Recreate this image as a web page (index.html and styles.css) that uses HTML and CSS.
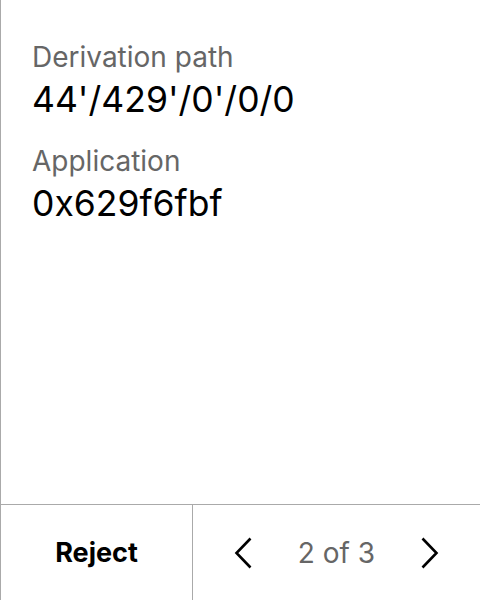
FILE: index.html
```html
<!DOCTYPE html>
<html>
<head>
<meta charset="utf-8">
<link rel="stylesheet" href="styles.css">
</head>
<body>
<div class="screen">
  <main class="content">
    <div class="field">
      <div class="label">Derivation path</div>
      <div class="value">44'/429'/0'/0/0</div>
    </div>
    <div class="field">
      <div class="label">Application</div>
      <div class="value">0x629f6fbf</div>
    </div>
  </main>
  <footer class="footer">
    <div class="reject">Reject</div>
    <div class="pager">
      <svg class="chev" width="18" height="32" viewBox="0 0 18 32"><path d="M16.5 1.5 L2.5 16 L16.5 30.5" fill="none" stroke="#000" stroke-width="2.6"/></svg>
      <span class="count">2 of 3</span>
      <svg class="chev" width="18" height="32" viewBox="0 0 18 32"><path d="M1.5 1.5 L15.5 16 L1.5 30.5" fill="none" stroke="#000" stroke-width="2.6"/></svg>
    </div>
  </footer>
</div>
</body>
</html>
```
FILE: styles.css
```css
html, body { margin: 0; padding: 0; background: #fff; }
body { font-family: Inter, "Noto Sans", sans-serif; }
.screen {
  width: 480px; height: 600px; box-sizing: border-box;
  border-left: 1px solid #aaa;
  display: flex; flex-direction: column;
}
.content { flex: 1; padding: 40px 0 0 31px; display: flex; flex-direction: column; gap: 22px; }
.label { font-size: 28px; color: #666; line-height: 34px; }
.value { font-size: 35.5px; color: #000; line-height: 44px; margin-top: 4px; }
.footer {
  height: 96px; box-sizing: border-box; border-top: 1px solid #aaa; display: flex;
}
.reject {
  width: 191px; border-right: 1px solid #aaa;
  display: flex; align-items: center; justify-content: center;
  font-size: 27px; font-weight: 700; color: #000;
}
.pager { flex: 1; display: flex; align-items: center; justify-content: space-between; padding: 0 41px 0 41px; }
.count { font-size: 28px; color: #666; }
.chev { display: block; }
```
